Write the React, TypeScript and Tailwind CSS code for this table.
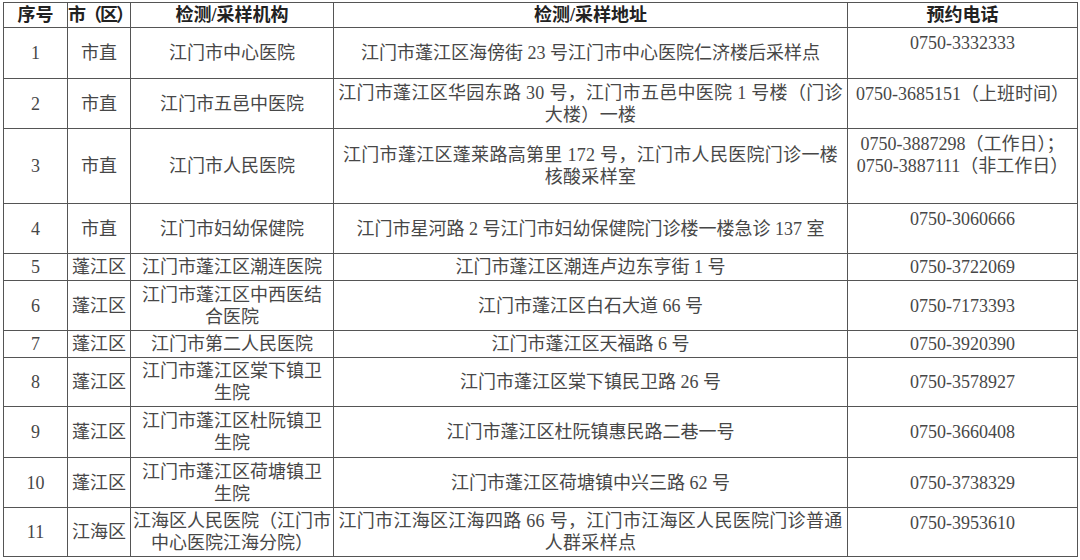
/**
 * Sampling sites table: numbered list of testing / sampling points
 * with district, institution, address and booking phone.
 */

type Site = {
  no: string
  area: string
  org: string[]
  addr: string[]
  phone: string[]
  // phone cell sits at the top of the row instead of the middle
  phoneTop?: boolean
  h: string
}

const sites: Site[] = [
  { no: "1", area: "市直", org: ["江门市中心医院"], addr: ["江门市蓬江区海傍街 23 号江门市中心医院仁济楼后采样点"], phone: ["0750-3332333"], phoneTop: true, h: "h-[51px]" },
  { no: "2", area: "市直", org: ["江门市五邑中医院"], addr: ["江门市蓬江区华园东路 30 号，江门市五邑中医院 1 号楼（门诊", "大楼）一楼"], phone: ["0750-3685151（上班时间）"], phoneTop: true, h: "h-[50px]" },
  { no: "3", area: "市直", org: ["江门市人民医院"], addr: ["江门市蓬江区蓬莱路高第里 172 号，江门市人民医院门诊一楼", "核酸采样室"], phone: ["0750-3887298（工作日）；", "0750-3887111（非工作日）"], phoneTop: true, h: "h-[75px]" },
  { no: "4", area: "市直", org: ["江门市妇幼保健院"], addr: ["江门市星河路 2 号江门市妇幼保健院门诊楼一楼急诊 137 室"], phone: ["0750-3060666"], phoneTop: true, h: "h-[50px]" },
  { no: "5", area: "蓬江区", org: ["江门市蓬江区潮连医院"], addr: ["江门市蓬江区潮连卢边东亨街 1 号"], phone: ["0750-3722069"], h: "h-[27px]" },
  { no: "6", area: "蓬江区", org: ["江门市蓬江区中西医结", "合医院"], addr: ["江门市蓬江区白石大道 66 号"], phone: ["0750-7173393"], h: "h-[50px]" },
  { no: "7", area: "蓬江区", org: ["江门市第二人民医院"], addr: ["江门市蓬江区天福路 6 号"], phone: ["0750-3920390"], h: "h-[27px]" },
  { no: "8", area: "蓬江区", org: ["江门市蓬江区棠下镇卫", "生院"], addr: ["江门市蓬江区棠下镇民卫路 26 号"], phone: ["0750-3578927"], h: "h-[49px]" },
  { no: "9", area: "蓬江区", org: ["江门市蓬江区杜阮镇卫", "生院"], addr: ["江门市蓬江区杜阮镇惠民路二巷一号"], phone: ["0750-3660408"], h: "h-[51px]" },
  { no: "10", area: "蓬江区", org: ["江门市蓬江区荷塘镇卫", "生院"], addr: ["江门市蓬江区荷塘镇中兴三路 62 号"], phone: ["0750-3738329"], h: "h-[50px]" },
  { no: "11", area: "江海区", org: ["江海区人民医院（江门市", "中心医院江海分院）"], addr: ["江门市江海区江海四路 66 号，江门市江海区人民医院门诊普通", "人群采样点"], phone: ["0750-3953610"], phoneTop: true, h: "h-[49px]" },
]

function Lines({ lines }: { lines: string[] }) {
  return (
    <>
      {lines.map((l, i) => (
        <div key={i} className="whitespace-nowrap">
          {l}
        </div>
      ))}
    </>
  )
}

const cell = "border border-[#555] p-0 text-center align-middle overflow-hidden"

export default function App() {
  return (
    <div className="min-h-[560px] w-[1080px] bg-white pl-[3px] pt-[2px] font-['Liberation_Serif','Noto_Sans_CJK_SC',serif] text-[18px] leading-[22px] text-[#474747]">
      <table className="w-[1074px] table-fixed border-collapse">
        <colgroup>
          <col className="w-[64px]" />
          <col className="w-[63px]" />
          <col className="w-[203px]" />
          <col className="w-[514px]" />
          <col className="w-[230px]" />
        </colgroup>
        <thead>
          <tr className="h-[25px] font-bold text-[#222]">
            <th className={cell}>序号</th>
            <th className={`${cell} whitespace-nowrap tracking-[-2px]`}>市（区）</th>
            <th className={cell}>检测/采样机构</th>
            <th className={cell}>检测/采样地址</th>
            <th className={cell}>预约电话</th>
          </tr>
        </thead>
        <tbody>
          {sites.map((s) => (
            <tr key={s.no} className={s.h}>
              <td className={cell}>{s.no}</td>
              <td className={cell}>{s.area}</td>
              <td className={cell}>
                <Lines lines={s.org} />
              </td>
              <td className={`${cell} ${s.addr.length > 1 ? "tracking-[0.3px]" : ""}`}>
                <Lines lines={s.addr} />
              </td>
              <td className={`${cell} ${s.phoneTop ? "!align-top pt-[4px]" : ""}`}>
                <Lines lines={s.phone} />
              </td>
            </tr>
          ))}
        </tbody>
      </table>
    </div>
  )
}
